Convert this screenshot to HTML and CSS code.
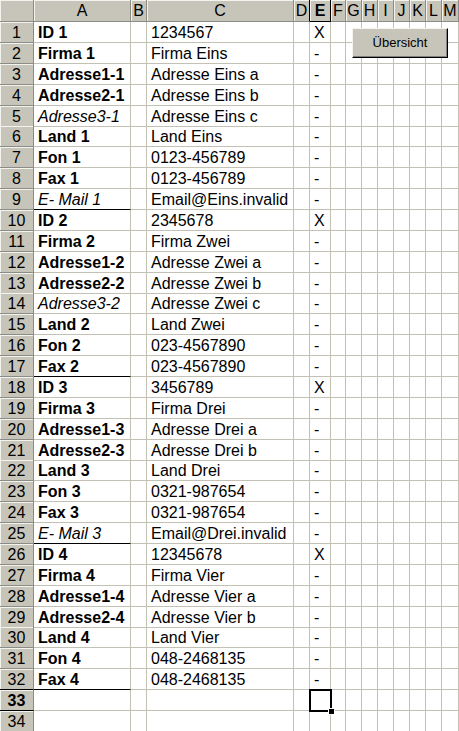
FILE: index.html
```html
<!DOCTYPE html>
<html>
<head>
<meta charset="utf-8">
<link rel="stylesheet" href="styles.css">
</head>
<body>
<div class="sheet">
  <div class="row head">
    <div class="ch corner"></div><div class="ch">A</div><div class="ch">B</div><div class="ch">C</div><div class="ch pre">D</div><div class="ch sel">E</div><div class="ch">F</div><div class="ch">G</div><div class="ch">H</div><div class="ch">I</div><div class="ch">J</div><div class="ch">K</div><div class="ch">L</div><div class="ch">M</div>
  </div>
  <div class="row"><div class="rh">1</div><div class="c b">ID 1</div><div class="c"></div><div class="c">1234567</div><div class="c"></div><div class="c e">X</div><div class="c"></div><div class="c"></div><div class="c"></div><div class="c"></div><div class="c"></div><div class="c"></div><div class="c"></div><div class="c"></div></div>
  <div class="row"><div class="rh">2</div><div class="c b">Firma 1</div><div class="c"></div><div class="c">Firma Eins</div><div class="c"></div><div class="c e">-</div><div class="c"></div><div class="c"></div><div class="c"></div><div class="c"></div><div class="c"></div><div class="c"></div><div class="c"></div><div class="c"></div></div>
  <div class="row"><div class="rh">3</div><div class="c b">Adresse1-1</div><div class="c"></div><div class="c">Adresse Eins a</div><div class="c"></div><div class="c e">-</div><div class="c"></div><div class="c"></div><div class="c"></div><div class="c"></div><div class="c"></div><div class="c"></div><div class="c"></div><div class="c"></div></div>
  <div class="row"><div class="rh">4</div><div class="c b">Adresse2-1</div><div class="c"></div><div class="c">Adresse Eins b</div><div class="c"></div><div class="c e">-</div><div class="c"></div><div class="c"></div><div class="c"></div><div class="c"></div><div class="c"></div><div class="c"></div><div class="c"></div><div class="c"></div></div>
  <div class="row"><div class="rh">5</div><div class="c i">Adresse3-1</div><div class="c"></div><div class="c">Adresse Eins c</div><div class="c"></div><div class="c e">-</div><div class="c"></div><div class="c"></div><div class="c"></div><div class="c"></div><div class="c"></div><div class="c"></div><div class="c"></div><div class="c"></div></div>
  <div class="row"><div class="rh">6</div><div class="c b">Land 1</div><div class="c"></div><div class="c">Land Eins</div><div class="c"></div><div class="c e">-</div><div class="c"></div><div class="c"></div><div class="c"></div><div class="c"></div><div class="c"></div><div class="c"></div><div class="c"></div><div class="c"></div></div>
  <div class="row"><div class="rh">7</div><div class="c b">Fon 1</div><div class="c"></div><div class="c">0123-456789</div><div class="c"></div><div class="c e">-</div><div class="c"></div><div class="c"></div><div class="c"></div><div class="c"></div><div class="c"></div><div class="c"></div><div class="c"></div><div class="c"></div></div>
  <div class="row"><div class="rh">8</div><div class="c b">Fax 1</div><div class="c"></div><div class="c">0123-456789</div><div class="c"></div><div class="c e">-</div><div class="c"></div><div class="c"></div><div class="c"></div><div class="c"></div><div class="c"></div><div class="c"></div><div class="c"></div><div class="c"></div></div>
  <div class="row"><div class="rh">9</div><div class="c i end">E- Mail 1</div><div class="c"></div><div class="c">Email@Eins.invalid</div><div class="c"></div><div class="c e">-</div><div class="c"></div><div class="c"></div><div class="c"></div><div class="c"></div><div class="c"></div><div class="c"></div><div class="c"></div><div class="c"></div></div>
  <div class="row"><div class="rh">10</div><div class="c b">ID 2</div><div class="c"></div><div class="c">2345678</div><div class="c"></div><div class="c e">X</div><div class="c"></div><div class="c"></div><div class="c"></div><div class="c"></div><div class="c"></div><div class="c"></div><div class="c"></div><div class="c"></div></div>
  <div class="row"><div class="rh">11</div><div class="c b">Firma 2</div><div class="c"></div><div class="c">Firma Zwei</div><div class="c"></div><div class="c e">-</div><div class="c"></div><div class="c"></div><div class="c"></div><div class="c"></div><div class="c"></div><div class="c"></div><div class="c"></div><div class="c"></div></div>
  <div class="row"><div class="rh">12</div><div class="c b">Adresse1-2</div><div class="c"></div><div class="c">Adresse Zwei a</div><div class="c"></div><div class="c e">-</div><div class="c"></div><div class="c"></div><div class="c"></div><div class="c"></div><div class="c"></div><div class="c"></div><div class="c"></div><div class="c"></div></div>
  <div class="row"><div class="rh">13</div><div class="c b">Adresse2-2</div><div class="c"></div><div class="c">Adresse Zwei b</div><div class="c"></div><div class="c e">-</div><div class="c"></div><div class="c"></div><div class="c"></div><div class="c"></div><div class="c"></div><div class="c"></div><div class="c"></div><div class="c"></div></div>
  <div class="row"><div class="rh">14</div><div class="c i">Adresse3-2</div><div class="c"></div><div class="c">Adresse Zwei c</div><div class="c"></div><div class="c e">-</div><div class="c"></div><div class="c"></div><div class="c"></div><div class="c"></div><div class="c"></div><div class="c"></div><div class="c"></div><div class="c"></div></div>
  <div class="row"><div class="rh">15</div><div class="c b">Land 2</div><div class="c"></div><div class="c">Land Zwei</div><div class="c"></div><div class="c e">-</div><div class="c"></div><div class="c"></div><div class="c"></div><div class="c"></div><div class="c"></div><div class="c"></div><div class="c"></div><div class="c"></div></div>
  <div class="row"><div class="rh">16</div><div class="c b">Fon 2</div><div class="c"></div><div class="c">023-4567890</div><div class="c"></div><div class="c e">-</div><div class="c"></div><div class="c"></div><div class="c"></div><div class="c"></div><div class="c"></div><div class="c"></div><div class="c"></div><div class="c"></div></div>
  <div class="row"><div class="rh">17</div><div class="c b end">Fax 2</div><div class="c"></div><div class="c">023-4567890</div><div class="c"></div><div class="c e">-</div><div class="c"></div><div class="c"></div><div class="c"></div><div class="c"></div><div class="c"></div><div class="c"></div><div class="c"></div><div class="c"></div></div>
  <div class="row"><div class="rh">18</div><div class="c b">ID 3</div><div class="c"></div><div class="c">3456789</div><div class="c"></div><div class="c e">X</div><div class="c"></div><div class="c"></div><div class="c"></div><div class="c"></div><div class="c"></div><div class="c"></div><div class="c"></div><div class="c"></div></div>
  <div class="row"><div class="rh">19</div><div class="c b">Firma 3</div><div class="c"></div><div class="c">Firma Drei</div><div class="c"></div><div class="c e">-</div><div class="c"></div><div class="c"></div><div class="c"></div><div class="c"></div><div class="c"></div><div class="c"></div><div class="c"></div><div class="c"></div></div>
  <div class="row"><div class="rh">20</div><div class="c b">Adresse1-3</div><div class="c"></div><div class="c">Adresse Drei a</div><div class="c"></div><div class="c e">-</div><div class="c"></div><div class="c"></div><div class="c"></div><div class="c"></div><div class="c"></div><div class="c"></div><div class="c"></div><div class="c"></div></div>
  <div class="row"><div class="rh">21</div><div class="c b">Adresse2-3</div><div class="c"></div><div class="c">Adresse Drei b</div><div class="c"></div><div class="c e">-</div><div class="c"></div><div class="c"></div><div class="c"></div><div class="c"></div><div class="c"></div><div class="c"></div><div class="c"></div><div class="c"></div></div>
  <div class="row"><div class="rh">22</div><div class="c b">Land 3</div><div class="c"></div><div class="c">Land Drei</div><div class="c"></div><div class="c e">-</div><div class="c"></div><div class="c"></div><div class="c"></div><div class="c"></div><div class="c"></div><div class="c"></div><div class="c"></div><div class="c"></div></div>
  <div class="row"><div class="rh">23</div><div class="c b">Fon 3</div><div class="c"></div><div class="c">0321-987654</div><div class="c"></div><div class="c e">-</div><div class="c"></div><div class="c"></div><div class="c"></div><div class="c"></div><div class="c"></div><div class="c"></div><div class="c"></div><div class="c"></div></div>
  <div class="row"><div class="rh">24</div><div class="c b">Fax 3</div><div class="c"></div><div class="c">0321-987654</div><div class="c"></div><div class="c e">-</div><div class="c"></div><div class="c"></div><div class="c"></div><div class="c"></div><div class="c"></div><div class="c"></div><div class="c"></div><div class="c"></div></div>
  <div class="row"><div class="rh">25</div><div class="c i end">E- Mail 3</div><div class="c"></div><div class="c">Email@Drei.invalid</div><div class="c"></div><div class="c e">-</div><div class="c"></div><div class="c"></div><div class="c"></div><div class="c"></div><div class="c"></div><div class="c"></div><div class="c"></div><div class="c"></div></div>
  <div class="row"><div class="rh">26</div><div class="c b">ID 4</div><div class="c"></div><div class="c">12345678</div><div class="c"></div><div class="c e">X</div><div class="c"></div><div class="c"></div><div class="c"></div><div class="c"></div><div class="c"></div><div class="c"></div><div class="c"></div><div class="c"></div></div>
  <div class="row"><div class="rh">27</div><div class="c b">Firma 4</div><div class="c"></div><div class="c">Firma Vier</div><div class="c"></div><div class="c e">-</div><div class="c"></div><div class="c"></div><div class="c"></div><div class="c"></div><div class="c"></div><div class="c"></div><div class="c"></div><div class="c"></div></div>
  <div class="row"><div class="rh">28</div><div class="c b">Adresse1-4</div><div class="c"></div><div class="c">Adresse Vier a</div><div class="c"></div><div class="c e">-</div><div class="c"></div><div class="c"></div><div class="c"></div><div class="c"></div><div class="c"></div><div class="c"></div><div class="c"></div><div class="c"></div></div>
  <div class="row"><div class="rh">29</div><div class="c b">Adresse2-4</div><div class="c"></div><div class="c">Adresse Vier b</div><div class="c"></div><div class="c e">-</div><div class="c"></div><div class="c"></div><div class="c"></div><div class="c"></div><div class="c"></div><div class="c"></div><div class="c"></div><div class="c"></div></div>
  <div class="row"><div class="rh">30</div><div class="c b">Land 4</div><div class="c"></div><div class="c">Land Vier</div><div class="c"></div><div class="c e">-</div><div class="c"></div><div class="c"></div><div class="c"></div><div class="c"></div><div class="c"></div><div class="c"></div><div class="c"></div><div class="c"></div></div>
  <div class="row"><div class="rh">31</div><div class="c b">Fon 4</div><div class="c"></div><div class="c">048-2468135</div><div class="c"></div><div class="c e">-</div><div class="c"></div><div class="c"></div><div class="c"></div><div class="c"></div><div class="c"></div><div class="c"></div><div class="c"></div><div class="c"></div></div>
  <div class="row"><div class="rh pre">32</div><div class="c b end">Fax 4</div><div class="c"></div><div class="c">048-2468135</div><div class="c"></div><div class="c e">-</div><div class="c"></div><div class="c"></div><div class="c"></div><div class="c"></div><div class="c"></div><div class="c"></div><div class="c"></div><div class="c"></div></div>
  <div class="row"><div class="rh sel">33</div><div class="c"></div><div class="c"></div><div class="c"></div><div class="c"></div><div class="c active"></div><div class="c"></div><div class="c"></div><div class="c"></div><div class="c"></div><div class="c"></div><div class="c"></div><div class="c"></div><div class="c"></div></div>
  <div class="row"><div class="rh">34</div><div class="c"></div><div class="c"></div><div class="c"></div><div class="c"></div><div class="c"></div><div class="c"></div><div class="c"></div><div class="c"></div><div class="c"></div><div class="c"></div><div class="c"></div><div class="c"></div><div class="c"></div></div>
</div>
<button class="btn">Übersicht</button>
</body>
</html>
```
FILE: styles.css
```css
html, body {
  margin: 0;
  padding: 0;
  background: #fff;
  overflow: hidden;
  width: 459px;
  height: 731px;
}
body {
  position: relative;
  font-family: "Liberation Sans", Arial, sans-serif;
  font-size: 16px;
  color: #000;
}
.sheet {
  width: 480px;
}
.row {
  display: grid;
  grid-template-columns: 34px 97px 16px 147px 16px 21px 15px 16px 16px 16px 16px 16px 16px 17px 16px;
  height: 20.875px;
}
.row.head {
  height: 22px;
}
.c, .rh, .ch {
  box-sizing: border-box;
  white-space: nowrap;
  overflow: visible;
}
.c {
  border-right: 1px solid #c2c1b3;
  border-bottom: 1px solid #c2c1b3;
  padding-left: 4px;
  display: flex;
  align-items: flex-end;
  line-height: 18px;
}
.c.b { font-weight: bold; }
.c.i { font-style: italic; }
.c.e { padding-left: 4px; }
.c.end { border-bottom-color: #000; }
.rh, .ch {
  background: #c7c5b9;
  border-right: 1px solid #8c8c86;
  border-bottom: 1px solid #8c8c86;
  box-shadow: inset 1px 1px 0 #f4f4ee;
  display: flex;
  align-items: center;
  justify-content: center;
  line-height: 18px;
  font-family: "Liberation Sans", Arial, sans-serif;
}
.rh { padding-top: 2px; }
.ch { padding-top: 1px; }
.ch.pre { border-right-color: #000; }
.ch.sel {
  font-weight: bold;
  border-right-color: #000;
  border-bottom-color: #000;
}
.rh.pre { border-bottom-color: #000; }
.rh.sel {
  font-weight: bold;
  border-bottom-color: #000;
}
.c.active {
  position: relative;
}
.c.active::before {
  content: "";
  position: absolute;
  left: -1px;
  top: -1px;
  width: 23px;
  height: 23px;
  box-sizing: border-box;
  border: 2px solid #000;
}
.c.active::after {
  content: "";
  position: absolute;
  right: -4px;
  bottom: -4px;
  width: 5px;
  height: 5px;
  background: #000;
  outline: 1px solid #fff;
}
.btn {
  position: absolute;
  left: 352px;
  top: 28px;
  width: 96px;
  height: 30px;
  margin: 0;
  padding: 0 0 1px 0;
  box-sizing: border-box;
  background: #c7c5b9;
  border: 1px solid;
  border-color: #f4f4ee #000 #000 #f4f4ee;
  box-shadow: inset -1px -1px 0 #808080;
  font-family: "Liberation Sans", Arial, sans-serif;
  font-size: 13px;
  color: #000;
}
```
